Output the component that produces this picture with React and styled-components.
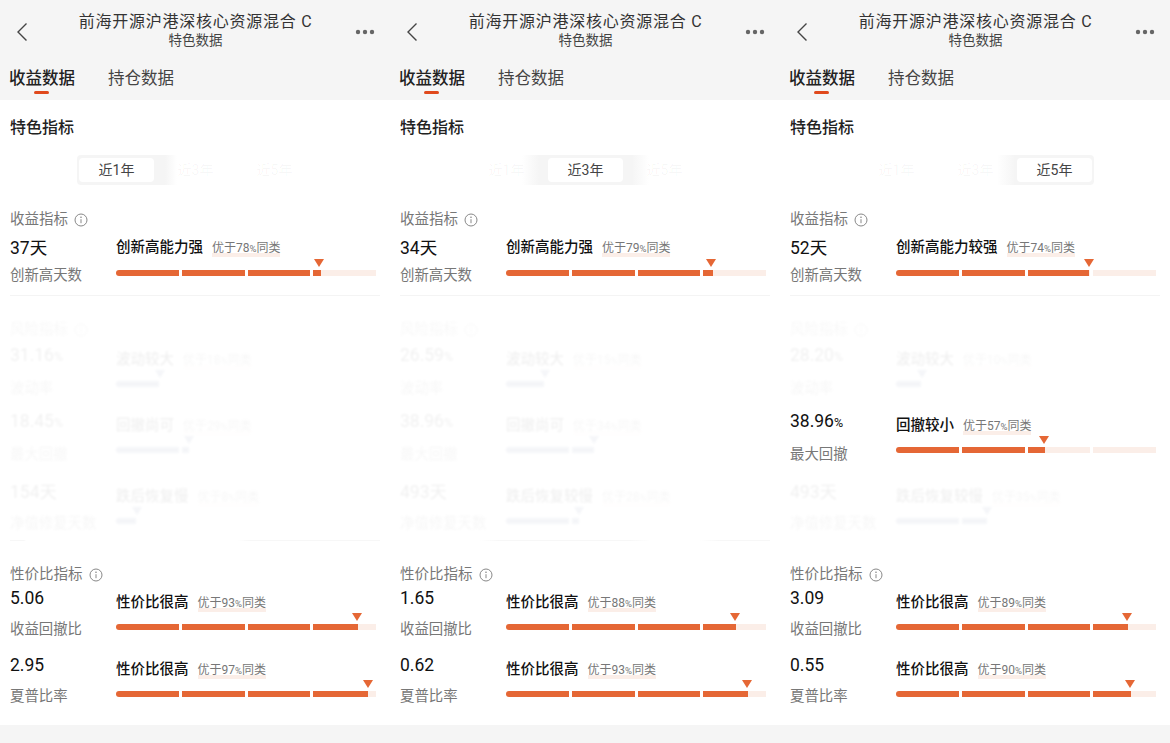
import React from 'react'
import styled, {createGlobalStyle} from 'styled-components'

const GlobalStyle = createGlobalStyle`
    html, body {
        margin: 0;
        padding: 0;
        background: #fff;
    }
    body {
        font-family: Roboto, "Noto Sans CJK SC", sans-serif;
    }
`

const Page = styled.div`
    display: grid;
    grid-template-columns: repeat(3, 390px);
    width: 1170px;
    height: 743px;
    overflow: hidden;
`
const Column = styled.div`
    display: flex;
    flex-direction: column;
    height: 743px;
`
const Head = styled.div`
    height: 100px;
    background: #f5f5f5;
`
const TopBar = styled.div`
    height: 60px;
    display: flex;
    align-items: flex-start;
    justify-content: space-between;
    padding: 0 15px 0 16px;
`
const BackIcon = styled.svg`
    width: 12px;
    height: 20px;
    margin-top: 22px;
`
const MoreIcon = styled.svg`
    width: 20px;
    height: 6px;
    margin-top: 29px;
`
const TitleBlock = styled.div`
    flex: 1;
    text-align: center;
    padding: 11px 0 0 8px;
`
const Title = styled.div`
    font-size: 16px;
    line-height: 22px;
    letter-spacing: 0.75px;
    color: #333;
`
const Subtitle = styled.div`
    font-size: 13.5px;
    line-height: 16px;
    color: #444;
    margin-top: -1px;
`
const Tabs = styled.div`
    height: 40px;
    display: flex;
    gap: 33px;
    padding-left: 9px;
`
const Tab = styled.div`
    position: relative;
    font-size: 16.5px;
    line-height: 24px;
    padding-top: 7px;
    color: ${props => props.$active ? '#222' : '#444'};
    font-weight: ${props => props.$active ? 500 : 400};
    ${props => props.$active && `
        &::after {
            content: "";
            position: absolute;
            left: 25px;
            top: 31px;
            width: 15px;
            height: 3px;
            border-radius: 2px;
            background: #e0491c;
        }
    `}
`
const Body = styled.div`
    flex: 1;
    padding: 0 10px;
    background: #fff;
`
const Footer = styled.div`
    height: 18px;
    background: #f5f5f5;
`
const SectionTitle = styled.div`
    margin-top: 18px;
    font-size: 16px;
    line-height: 20px;
    font-weight: 500;
    color: #222;
`
const Range = styled.div`
    display: flex;
    gap: 4px;
    width: 237px;
    height: 30px;
    box-sizing: border-box;
    margin: 17px 0 0 67px;
    padding: 3px 2px;
    border-radius: 4px;
`
const RangeItem = styled.div`
    width: 75px;
    text-align: center;
    font-size: 14px;
    line-height: 24px;
    border-radius: 4px;
    color: ${props => props.$active ? '#444' : 'rgba(0, 0, 0, 0.04)'};
    background: ${props => props.$active ? '#fff' : 'transparent'};
`
const GroupTitle = styled.div`
    display: flex;
    align-items: center;
    gap: 6px;
    margin-top: ${props => props.$top}px;
    font-size: 14.5px;
    line-height: 20px;
    color: #777;
    ${props => props.$faded && `
        opacity: 0.05;
        filter: blur(0.8px);
    `}
`
const InfoIcon = styled.svg`
    width: 14px;
    height: 14px;
`
const Row = styled.div`
    display: flex;
    margin-top: ${props => props.$top}px;
    height: ${props => props.$compact ? 47 : 51}px;
    ${props => props.$faded && `
        opacity: 0.06;
        filter: blur(0.8px);
    `}
`
const Left = styled.div`
    width: 106px;
`
const Value = styled.div`
    font-size: 17.5px;
    line-height: 20px;
    color: #111;
    small {
        font-size: 12.5px;
    }
`
const Label = styled.div`
    margin-top: ${props => props.$compact ? 8 : 12}px;
    font-size: 14.4px;
    line-height: 20px;
    color: #777;
`
const Right = styled.div`
    width: 260px;
    padding-top: ${props => props.$compact ? 0 : 5}px;
`
const HeadLine = styled.div`
    display: flex;
    align-items: center;
    gap: 9px;
    height: 20px;
`
const Verdict = styled.div`
    font-size: 14.5px;
    line-height: 20px;
    font-weight: 500;
    color: #111;
`
const Note = styled.div`
    font-size: 12px;
    line-height: 16px;
    color: #777;
    background: linear-gradient(#fbeee8, #fbeee8) left bottom / 100% 4px no-repeat;
    small {
        font-size: 9.5px;
    }
`
const Bar = styled.div`
    position: relative;
    display: flex;
    gap: 3px;
    height: 6px;
    margin-top: ${props => props.$compact ? 12 : 11}px;
`
const Segment = styled.div`
    flex: 1;
    overflow: hidden;
    background: ${props => props.$faded ? 'transparent' : '#fbeee8'};
    &:first-child {
        border-radius: 3px 0 0 3px;
    }
    &:last-child {
        border-radius: 0 3px 3px 0;
    }
`
const Fill = styled.div`
    height: 100%;
    background: ${props => props.$faded ? '#5a6a9a' : '#e56735'};
`
const Marker = styled.div`
    position: absolute;
    top: -11px;
    margin-left: -5px;
    width: 0;
    height: 0;
    border-left: 5px solid transparent;
    border-right: 5px solid transparent;
    border-top: 8px solid ${props => props.$faded ? '#5a6a9a' : '#e56735'};
`
const Divider = styled.div`
    height: 1px;
    margin-top: ${props => props.$top}px;
    background: ${props => props.$bg || '#f4f4f4'};
`

const Percent = ({text}) => {
    const parts = text.split('%')
    if (parts.length < 2) return text
    return <>{parts[0]}<small>%</small>{parts[1]}</>
}

const Info = () => <InfoIcon viewBox="0 0 14 14" fill="none" stroke="#888" strokeWidth="1">
    <circle cx="7" cy="7" r="6"/>
    <path d="M7 6.2V10.2"/>
    <circle cx="7" cy="4.2" r="0.4"/>
</InfoIcon>

const Metric = ({row, top, compact, faded}) => {
    const segments = [0, 1, 2, 3].map(i => Math.max(0, Math.min(1, (row.pct - i * 25) / 25)))
    return <Row $top={top} $compact={compact} $faded={faded}>
        <Left>
            <Value><Percent text={row.value}/></Value>
            <Label $compact={compact}>{row.label}</Label>
        </Left>
        <Right $compact={compact}>
            <HeadLine>
                <Verdict>{row.verdict}</Verdict>
                <Note><Percent text={`优于${row.better}%同类`}/></Note>
            </HeadLine>
            <Bar $compact={compact}>
                {segments.map((amount, i) => <Segment key={i} $faded={faded}>
                    <Fill $faded={faded} style={{width: `${amount * 100}%`}}/>
                </Segment>)}
                <Marker $faded={faded} style={{left: `${row.pct}%`}}/>
            </Bar>
        </Right>
    </Row>
}

const columns = [
    {
        active: 0,
        rangeBg: 'linear-gradient(90deg, #f5f5f5 0, #f5f5f5 88px, #fff 100px)',
        lineBg: 'linear-gradient(90deg, #f7f7f7 14px, #fff 16px, #fff 228px, #f7f7f7 240px)',
        income: {value: '37天', label: '创新高天数', verdict: '创新高能力强', better: 78, pct: 78},
        risk: [
            {value: '31.16%', label: '波动率', verdict: '波动较大', better: 18, pct: 17},
            {value: '18.45%', label: '最大回撤', verdict: '回撤尚可', better: 29, pct: 28},
            {value: '154天', label: '净值修复天数', verdict: '跌后恢复慢', better: 8, pct: 8},
        ],
        clear: -1,
        value: [
            {value: '5.06', label: '收益回撤比', verdict: '性价比很高', better: 93, pct: 92.7},
            {value: '2.95', label: '夏普比率', verdict: '性价比很高', better: 97, pct: 96.8},
        ],
    },
    {
        active: 1,
        rangeBg: 'linear-gradient(90deg, #fff 55px, #f5f5f5 72px, #f5f5f5 165px, #fff 182px)',
        lineBg: 'linear-gradient(90deg, #fff 80px, #f7f7f7 100px, #f7f7f7 230px, #fff 250px, #fff 300px, #f7f7f7 320px)',
        income: {value: '34天', label: '创新高天数', verdict: '创新高能力强', better: 79, pct: 79},
        risk: [
            {value: '26.59%', label: '波动率', verdict: '波动较大', better: 15, pct: 15},
            {value: '38.96%', label: '最大回撤', verdict: '回撤尚可', better: 34, pct: 34},
            {value: '493天', label: '净值修复天数', verdict: '跌后恢复较慢', better: 28, pct: 28},
        ],
        clear: -1,
        value: [
            {value: '1.65', label: '收益回撤比', verdict: '性价比很高', better: 88, pct: 88},
            {value: '0.62', label: '夏普比率', verdict: '性价比很高', better: 93, pct: 92.7},
        ],
    },
    {
        active: 2,
        rangeBg: 'linear-gradient(90deg, #fff 140px, #f5f5f5 158px, #f5f5f5 100%)',
        lineBg: '#fff',
        income: {value: '52天', label: '创新高天数', verdict: '创新高能力较强', better: 74, pct: 74.4},
        risk: [
            {value: '28.20%', label: '波动率', verdict: '波动较大', better: 10, pct: 10},
            {value: '38.96%', label: '最大回撤', verdict: '回撤较小', better: 57, pct: 57},
            {value: '493天', label: '净值修复天数', verdict: '跌后恢复较慢', better: 35, pct: 35},
        ],
        clear: 1,
        value: [
            {value: '3.09', label: '收益回撤比', verdict: '性价比很高', better: 89, pct: 89},
            {value: '0.55', label: '夏普比率', verdict: '性价比很高', better: 90, pct: 90},
        ],
    },
]

const riskGaps = [5, 15, 20]
const ranges = ['近1年', '近3年', '近5年']

const FundColumn = ({data}) => <Column>
    <Head>
        <TopBar>
            <BackIcon viewBox="0 0 12 20" fill="none" stroke="#444" strokeWidth="1.4">
                <path d="M10.5 1.5L2 10L10.5 18.5"/>
            </BackIcon>
            <TitleBlock>
                <Title>前海开源沪港深核心资源混合 C</Title>
                <Subtitle>特色数据</Subtitle>
            </TitleBlock>
            <MoreIcon viewBox="0 0 20 6" fill="#666">
                <circle cx="3" cy="3" r="2.2"/>
                <circle cx="10" cy="3" r="2.2"/>
                <circle cx="17" cy="3" r="2.2"/>
            </MoreIcon>
        </TopBar>
        <Tabs>
            <Tab $active>收益数据</Tab>
            <Tab>持仓数据</Tab>
        </Tabs>
    </Head>
    <Body>
        <SectionTitle>特色指标</SectionTitle>
        <Range style={{background: data.rangeBg}}>
            {ranges.map((name, i) => <RangeItem key={name} $active={i === data.active}>{name}</RangeItem>)}
        </Range>
        <GroupTitle $top={25}>收益指标<Info/></GroupTitle>
        <Metric row={data.income} top={8} compact/>
        <Divider $top={10}/>
        <GroupTitle $top={24} $faded>风险指标<Info/></GroupTitle>
        {data.risk.map((row, i) => <Metric key={row.label} row={row} top={riskGaps[i]} faded={i !== data.clear}/>)}
        <Divider $top={7} $bg={data.lineBg}/>
        <GroupTitle $top={24}>性价比指标<Info/></GroupTitle>
        <Metric row={data.value[0]} top={3}/>
        <Metric row={data.value[1]} top={16}/>
    </Body>
    <Footer/>
</Column>

export default class App extends React.Component {
    render() {
        return <Page>
            <GlobalStyle/>
            {columns.map(data => <FundColumn key={data.active} data={data}/>)}
        </Page>
    }
}
